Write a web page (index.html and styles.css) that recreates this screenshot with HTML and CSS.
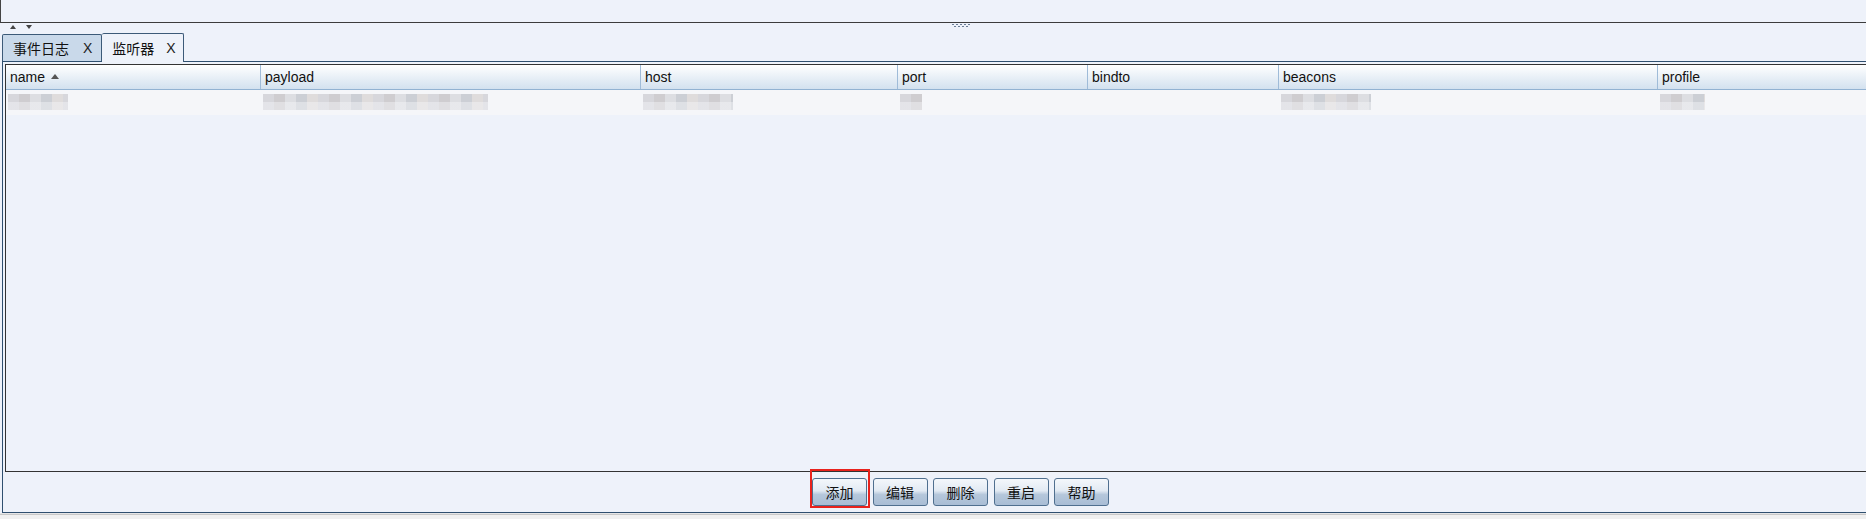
FILE: index.html
```html
<!DOCTYPE html>
<html lang="zh">
<head>
<meta charset="utf-8">
<title>监听器</title>
<link rel="stylesheet" href="styles.css">
</head>
<body>
<div class="top-pane"></div>
<div class="split-bar">
  <div class="arrows">
    <svg width="6" height="4" viewBox="0 0 6 4"><path d="M0 4 L3 0 L6 4 Z" fill="#444"/></svg>
    <svg width="6" height="4" viewBox="0 0 6 4"><path d="M0 0 L6 0 L3 4 Z" fill="#444"/></svg>
  </div>
  <svg class="grip" width="20" height="5" viewBox="0 0 20 5">
    <g fill="#6a7e96"><rect x="0" y="0" width="2" height="1"/><rect x="4" y="0" width="2" height="1"/><rect x="8" y="0" width="2" height="1"/><rect x="12" y="0" width="2" height="1"/><rect x="16" y="0" width="2" height="1"/><rect x="2" y="2" width="2" height="1"/><rect x="6" y="2" width="2" height="1"/><rect x="10" y="2" width="2" height="1"/><rect x="14" y="2" width="2" height="1"/></g>
  </svg>
</div>
<div class="tabs">
  <div class="tab"><span class="tab-title">事件日志</span><span class="tab-x">X</span></div>
  <div class="tab active"><span class="tab-title">监听器</span><span class="tab-x">X</span></div>
</div>
<div class="tab-pane">
  <div class="table">
    <div class="thead">
      <div class="th c-name">name <svg class="sort" width="8" height="5" viewBox="0 0 8 5"><path d="M0 5 L4 0 L8 5 Z" fill="#555"/></svg></div>
      <div class="th c-payload">payload</div>
      <div class="th c-host">host</div>
      <div class="th c-port">port</div>
      <div class="th c-bindto">bindto</div>
      <div class="th c-beacons">beacons</div>
      <div class="th c-profile">profile</div>
    </div>
    <div class="tr">
      <div class="td c-name"><div class="mosaic w60"></div></div>
      <div class="td c-payload"><div class="mosaic w222"></div></div>
      <div class="td c-host"><div class="mosaic w90"></div></div>
      <div class="td c-port"><div class="mosaic w22"></div></div>
      <div class="td c-bindto"></div>
      <div class="td c-beacons"><div class="mosaic w90"></div></div>
      <div class="td c-profile"><div class="mosaic w45"></div></div>
    </div>
  </div>
  <div class="buttons">
    <button class="btn highlighted">添加</button>
    <button class="btn">编辑</button>
    <button class="btn">删除</button>
    <button class="btn">重启</button>
    <button class="btn">帮助</button>
  </div>
</div>
<div class="status"></div>
</body>
</html>
```

FILE: styles.css
```css
html, body {
  margin: 0;
  padding: 0;
  overflow: hidden;
  width: 1866px;
  height: 519px;
}
body {
  background: #eef2fa;
  font-family: "Liberation Sans", Arial, "Noto Sans CJK SC", sans-serif;
  font-size: 14px;
  color: #111;
}
.top-pane {
  height: 22px;
  border-left: 1px solid #444;
  border-bottom: 1px solid #3c3c3c;
}
.split-bar {
  height: 10px;
  display: flex;
  align-items: flex-start;
}
.arrows {
  display: flex;
  gap: 10px;
  padding: 2px 0 0 10px;
}
.grip {
  margin: 1px 0 0 920px;
}
.tabs {
  display: flex;
  align-items: flex-end;
  height: 28px;
  padding-left: 2px;
}
.tab {
  height: 27px;
  box-sizing: border-box;
  display: flex;
  align-items: center;
  background: #c9d9ea;
  border: 1px solid #3c5a78;
  border-bottom: none;
  border-radius: 2px 2px 0 0;
  padding: 0 9px 0 10px;
}
.tab-title {
  font-family: "Noto Sans CJK SC", sans-serif;
  font-size: 14px;
  color: #111;
}
.tab-x {
  font-size: 14px;
  margin-left: 14px;
  color: #222;
}
.tab.active {
  background: #eef2fa;
  height: 29px;
  margin-bottom: -1px;
  position: relative;
  z-index: 1;
  padding: 0 7px 0 10px;
  border-left: none;
}
.tab.active .tab-x {
  margin-left: 12px;
}
.tab-pane {
  width: 1914px;
  margin-left: 2px;
  border: 1px solid #2f4f6f;
  padding: 2px 2px 0 2px;
  box-sizing: border-box;
  height: 452px;
}
.table {
  height: 408px;
  box-sizing: border-box;
  border: 1px solid #333;
  border-right: none;
  background: #eef2fa;
}
.thead {
  display: flex;
  height: 24px;
  background: linear-gradient(#ffffff, #d3e1ef);
  border-bottom: 1px solid #92b2d2;
}
.th {
  flex-shrink: 0;
  box-sizing: border-box;
  padding-left: 4px;
  line-height: 24px;
  font-size: 14px;
  border-right: 1px solid #9fbbd8;
  display: flex;
  align-items: center;
  gap: 6px;
}
.sort { margin-top: -1px; }
.c-name { width: 255px; }
.c-payload { width: 380px; }
.c-host { width: 257px; }
.c-port { width: 190px; }
.c-bindto { width: 191px; }
.c-beacons { width: 379px; }
.c-profile { width: 250px; border-right: none; }
.tr {
  display: flex;
  height: 25px;
  background: #f5f6f9;
}
.td {
  flex-shrink: 0;
  box-sizing: border-box;
  padding: 4px 0 0 2px;
}
.mosaic {
  height: 16px;
  background:
    linear-gradient(rgba(255,255,255,0) 50%, rgba(245,246,249,0.45) 50%),
    repeating-linear-gradient(90deg, #d2d2d8 0 11px, #c9c6c9 11px 22px, #d9dade 22px 33px, #c5c9cf 33px 44px, #dcd8d8 44px 55px);
  filter: blur(0.6px);
  opacity: 0.85;
}
.w60 { width: 60px; }
.w222 { width: 225px; }
.w90 { width: 90px; }
.w22 { width: 22px; }
.w45 { width: 45px; }
.buttons {
  display: flex;
  gap: 5.5px;
  padding: 6px 0 0 807px;
}
.btn {
  position: relative;
  width: 55px;
  height: 28px;
  box-sizing: border-box;
  border: 1px solid #4f6f8f;
  border-radius: 3px;
  background: linear-gradient(#f4f7fb 0%, #e2eaf3 45%, #b5c7db 60%, #a9bdd5 100%);
  font-family: "Noto Sans CJK SC", sans-serif;
  font-size: 14px;
  color: #111;
  padding: 0;
  line-height: 26px;
}
.highlighted::after {
  content: "";
  position: absolute;
  left: -3px;
  top: -10px;
  width: 60px;
  height: 39px;
  border: 2px solid #e8221c;
  box-sizing: border-box;
}
.status {
  height: 6px;
  box-sizing: border-box;
  background: linear-gradient(#e6e6e6 0 1px, #c8c8c8 1px 2px, #f0f0f0 2px);
}
```
